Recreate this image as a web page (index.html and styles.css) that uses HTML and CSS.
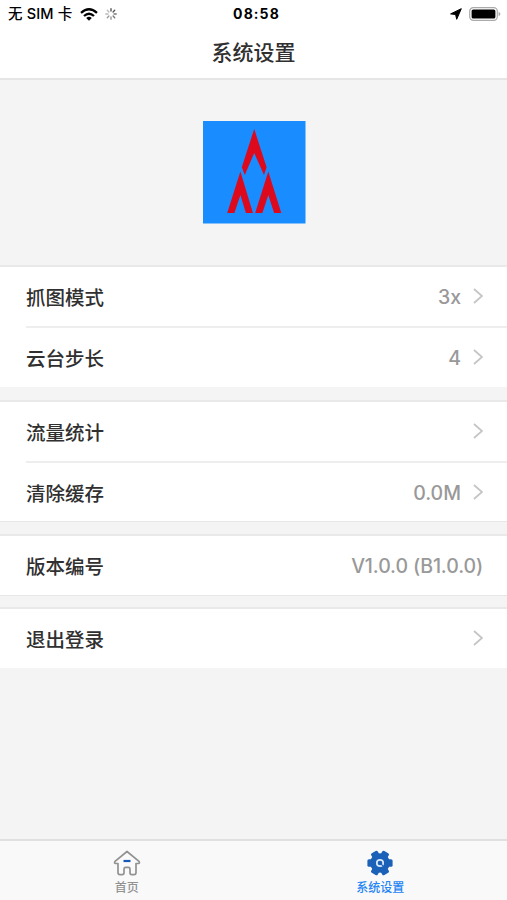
FILE: index.html
```html
<!DOCTYPE html>
<html lang="zh-CN">
<head>
<meta charset="utf-8">
<title>系统设置</title>
<link rel="stylesheet" href="styles.css">
</head>
<body>
<div class="screen">
  <div class="status">
    <div class="carrier">
      <span class="sim">无 SIM 卡</span>
      <svg class="wifi" width="18" height="13" viewBox="0 0 18 13"><g fill="none" stroke="#000" stroke-width="2.3"><path d="M1 4.8Q9-2.2 17 4.8"/><path d="M4 8Q9 3.6 14 8"/></g><path d="M6.2 9.9Q9 7.6 11.8 9.9L9 12.7Z"/></svg>
      <svg width="12" height="12" viewBox="-6 -6 12 12"><g stroke-width="1.4" stroke-linecap="round"><path stroke="#555" d="M0-3V-5.2M2.1-2.1 3.7-3.7"/><path stroke="#777" d="M3 0H5.2M2.1 2.1 3.7 3.7"/><path stroke="#999" d="M0 3V5.2M-2.1 2.1-3.7 3.7"/><path stroke="#bbb" d="M-3 0H-5.2M-2.1-2.1-3.7-3.7"/></g></svg>
    </div>
    <div class="time">08:58</div>
    <div class="power">
      <svg width="12" height="12" viewBox="0 0 12 12"><path d="M11.3.7 6.7 11.3 5.6 6.5.6 5.9Z" stroke="#000" stroke-linejoin="round"/></svg>
      <svg width="32" height="14" viewBox="0 0 32 14"><rect x=".7" y=".7" width="27.6" height="12.6" rx="3.6" fill="#fff" stroke="#aaa" stroke-width="1.2"/><rect x="2.6" y="2.5" width="23.8" height="9" rx="1.6"/><path d="M29.6 4.8Q31.4 5.5 31.4 7T29.6 9.2Z" fill="#aaa"/></svg>
    </div>
  </div>
  <h1 class="title">系统设置</h1>
  <div class="hero">
    <svg width="103" height="103" viewBox="0 0 103 103"><path fill="#198cff" d="M0 0H102.5V102.5H0Z"/><g fill="#dc0a1c"><path d="M51.2 8 63.6 46.3 61 54 51.2 32 41.8 54 38.8 46.3Z"/><path d="M37.4 50.5 49.9 92H42.9L37.4 74 31.4 92H24.2Z"/><path d="M65.3 50.5 78.3 92H71.1L65.3 74 59.4 92H52.2Z"/></g></svg>
  </div>
  <div class="group first">
    <div class="row"><span class="label">抓图模式</span><span class="value">3x</span><svg class="arrow" viewBox="0 0 10 16"><path d="M1 1 9 8 1 15"/></svg></div>
    <div class="row"><span class="label">云台步长</span><span class="value">4</span><svg class="arrow" viewBox="0 0 10 16"><path d="M1 1 9 8 1 15"/></svg></div>
  </div>
  <div class="group second">
    <div class="row"><span class="label">流量统计</span><span class="value"></span><svg class="arrow" viewBox="0 0 10 16"><path d="M1 1 9 8 1 15"/></svg></div>
    <div class="row"><span class="label">清除缓存</span><span class="value">0.0M</span><svg class="arrow" viewBox="0 0 10 16"><path d="M1 1 9 8 1 15"/></svg></div>
  </div>
  <div class="group third">
    <div class="row"><span class="label">版本编号</span><span class="value version">V1.0.0 (B1.0.0)</span></div>
  </div>
  <div class="group fourth">
    <div class="row"><span class="label">退出登录</span><span class="value"></span><svg class="arrow" viewBox="0 0 10 16"><path d="M1 1 9 8 1 15"/></svg></div>
  </div>
  <div class="tabs">
    <div class="tab">
      <svg width="28" height="26" viewBox="0 0 28 26"><path d="M14 1.5 2 11.4Q.8 13.2 2.8 13.5H5V22.5Q5 24.6 7 24.6H9.2Q11 24.6 11 22.8V19Q11 17.4 12.6 17.4H15.4Q17 17.4 17 19V22.8Q17 24.6 18.8 24.6H21Q23 24.6 23 22.5V13.5H25.2Q27.2 13.2 26 11.4Z" fill="#fafafa" stroke="#929292" stroke-width="1.7" stroke-linejoin="round"/><path d="M10.5 11H17.5" stroke="#1758b8" stroke-width="2.2"/></svg>
      <span>首页</span>
    </div>
    <div class="tab active">
      <svg width="28" height="26" viewBox="-14 -13 28 26"><g fill="#1b61b7"><circle r="9.8"/><rect x="-12.6" y="-3.8" width="25.2" height="7.6" rx="1.6"/><rect x="-12.6" y="-3.8" width="25.2" height="7.6" rx="1.6" transform="rotate(60)"/><rect x="-12.6" y="-3.8" width="25.2" height="7.6" rx="1.6" transform="rotate(120)"/></g><circle r="3.2" fill="none" stroke="#d9e8fb" stroke-width="1.7"/><path d="M.4.4 3.2 3.2" stroke="#1b61b7" stroke-width="1.2"/></svg>
      <span>系统设置</span>
    </div>
  </div>
</div>
</body>
</html>
```
FILE: styles.css
```css
* { box-sizing: border-box; }
body { margin: 0; font-family: Inter, "Noto Sans CJK SC", sans-serif; color: #303030; }
svg { display: block; flex: none; }
.screen { width: 507px; height: 900px; display: flex; flex-direction: column; background: #f4f4f4; overflow: hidden; }
.status { height: 28px; flex: none; display: grid; grid-template-columns: 1fr auto 1fr; align-items: center; padding: 0 6px 0 8px; background: #fff; color: #000; }
.carrier { display: flex; align-items: center; font-size: 14px; font-weight: 500; white-space: nowrap; }
.sim { width: 72px; line-height: 20px; font-size: 14.5px; letter-spacing: .15px; }
.wifi { margin-right: 7px; }
.time { font-size: 14px; font-weight: 700; letter-spacing: 1.1px; line-height: 20px; padding-left: 4px; }
.power { display: flex; align-items: center; justify-content: flex-end; gap: 7px; }
.title { height: 52px; flex: none; margin: 0; background: #fff; border-bottom: 2px solid #e5e5e5; text-align: center; font-size: 21px; line-height: 49px; font-weight: 500; }
.hero { height: 185px; flex: none; display: flex; justify-content: center; padding: 41px 0 0 1px; }
.group { flex: none; background: #fff; border-top: 2px solid #e9e9e9; }
.first { height: 122px; margin-bottom: 13px; }
.second { height: 122px; margin-bottom: 12px; border-bottom: 1px solid #e7e7e7; }
.third { height: 62px; margin-bottom: 11px; border-bottom: 1px solid #e7e7e7; }
.fourth { height: 61px; }
.row { height: 59px; margin-left: 26px; padding-right: 24px; display: flex; align-items: center; font-size: 19.5px; font-weight: 500; }
.row + .row { height: 62px; border-top: 2px solid #eee; }
.label { padding-bottom: 1px; }
.value { margin-left: auto; color: #999; font-size: 19.5px; }
.version { letter-spacing: -.1px; }
.arrow { width: 10px; height: 16px; margin: -2px 0 0 12px; fill: none; stroke: #c5c5c5; stroke-width: 1.8; }
.tabs { height: 61px; flex: none; margin-top: auto; display: flex; border-top: 2px solid #e0e0e0; background: #f9f9f9; }
.tab { flex: 1; display: flex; flex-direction: column; align-items: center; padding-top: 9px; font-size: 12px; line-height: 17px; font-weight: 500; color: #929292; }
.tab span { margin-top: 3px; }
.active { color: #2384f5; }
```
